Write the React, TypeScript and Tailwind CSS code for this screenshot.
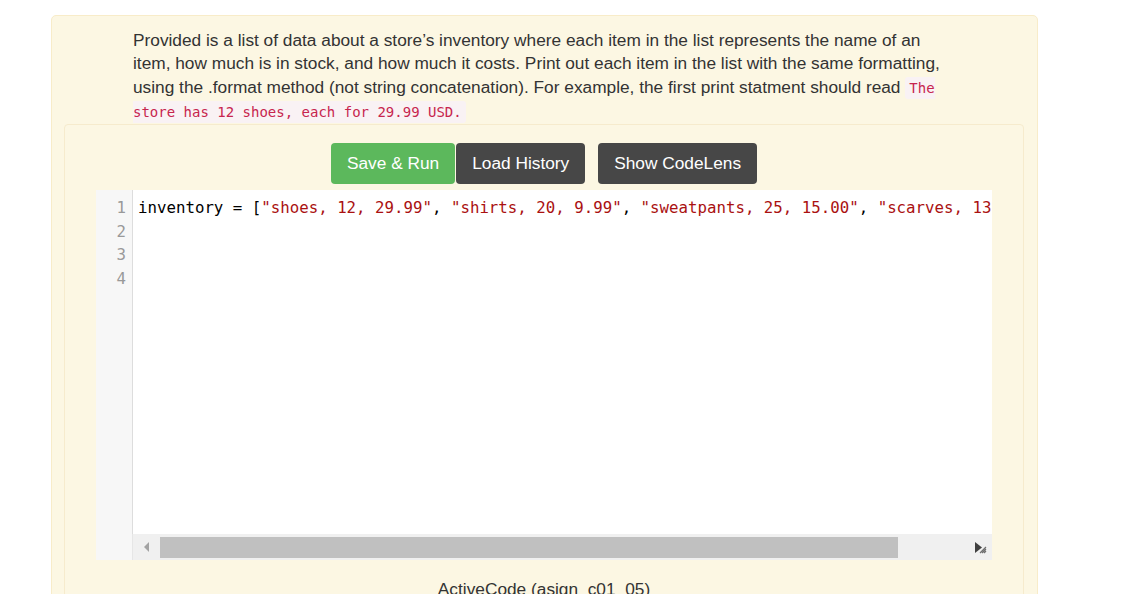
import React from "react"

const sans = "font-['Liberation_Sans',Arial,sans-serif]"
const mono = "font-['DejaVu_Sans_Mono','Liberation_Mono',monospace]"

const Str = ({ children }: { children: React.ReactNode }) => <span className="text-[#a11]">{children}</span>

const CodeEditor = () => {
    return (
        <div className="flex flex-col bg-white w-[896px] overflow-hidden">
            <div className="flex h-[344px]">
                <div className={`w-[37px] shrink-0 bg-[#f7f7f7] border-r border-[#ddd] pt-[6px] pr-[6px] text-right text-[#999] text-[15.75px] leading-[23.6px] ${mono}`}>
                    <div>1</div>
                    <div>2</div>
                    <div>3</div>
                    <div>4</div>
                </div>
                <div className={`flex-1 pt-[6px] pl-[5px] whitespace-pre overflow-hidden text-black text-[15.75px] leading-[23.6px] ${mono}`}>
                    <div>
                        inventory = [<Str>"shoes, 12, 29.99"</Str>, <Str>"shirts, 20, 9.99"</Str>, <Str>"sweatpants, 25, 15.00"</Str>, <Str>"scarves, 13, 7.75"</Str>]
                    </div>
                    <div>&nbsp;</div>
                    <div>&nbsp;</div>
                    <div>&nbsp;</div>
                </div>
            </div>
            {/* horizontal scrollbar */}
            <div className="flex h-[26px]">
                <div className="w-[37px] shrink-0 bg-[#f7f7f7] border-r border-[#e6e6e6]" />
                <div className="flex-1 flex items-center bg-[#f0f0f0]">
                    <div className="w-[27px] h-full flex items-center justify-center">
                        <svg width="8" height="10" viewBox="0 0 8 10">
                            <polygon points="6,0 6,10 1,5" fill="#a3a3a3" />
                        </svg>
                    </div>
                    <div className="w-[738px] h-[21px] bg-[#c0c0c0]" />
                    <div className="flex-1 h-full flex items-center justify-end pr-[5px]">
                        <svg width="13" height="13" viewBox="0 0 13 13">
                            <polygon points="1,1 1,12 8,6.5" fill="#404040" />
                            <path d="M6 12 L12 6 M8 12 L12 8 M10 12 L12 10" stroke="#6f6f6f" strokeWidth="1.2" />
                        </svg>
                    </div>
                </div>
            </div>
        </div>
    )
}

export default function App() {
    return (
        <div className={`bg-white min-h-screen pt-[15px] ${sans}`}>
            <div className="ml-[51px] w-[987px] rounded-[5px] border border-[#f8ecc9] bg-[#fcf7e3] pt-[13px] pl-[12px] pr-[13px]">
                <p className="ml-[69px] w-[816px] text-[17.3px] leading-[23.3px] text-[#333]">
                    Provided is a list of data about a store’s inventory where each item in the list represents the name of an item, how much is in stock, and how much it costs. Print out each item in the list with the same formatting, using the .format method (not string concatenation). For example, the first print statment should read{" "}
                    <code className={`bg-[#f9f2f4] text-[#c7254e] text-[14px] px-[4px] py-[3px] rounded-[3px] ${mono}`}>The store has 12 shoes, each for 29.99 USD.</code>
                </p>
                <div className="rounded-[4px] border border-[#f6ebcd] px-[31px] pt-[18px] pb-[40px]">
                    <div className="flex justify-center">
                        <div className="flex gap-px">
                            <button className="h-[41px] px-[16px] rounded-[4px] bg-[#5cb85c] text-white text-[17.3px]">Save &amp; Run</button>
                            <button className="h-[41px] px-[16px] rounded-[4px] bg-[#474747] text-white text-[17.3px]">Load History</button>
                        </div>
                        <button className="ml-[13px] h-[41px] px-[16px] rounded-[4px] bg-[#474747] text-white text-[17.3px]">Show CodeLens</button>
                    </div>
                    <div className="mt-[6px]">
                        <CodeEditor />
                    </div>
                    <p className="mt-[18px] text-center text-[17.3px] leading-[23px] text-[#333]">ActiveCode (asign_c01_05)</p>
                </div>
            </div>
        </div>
    )
}
